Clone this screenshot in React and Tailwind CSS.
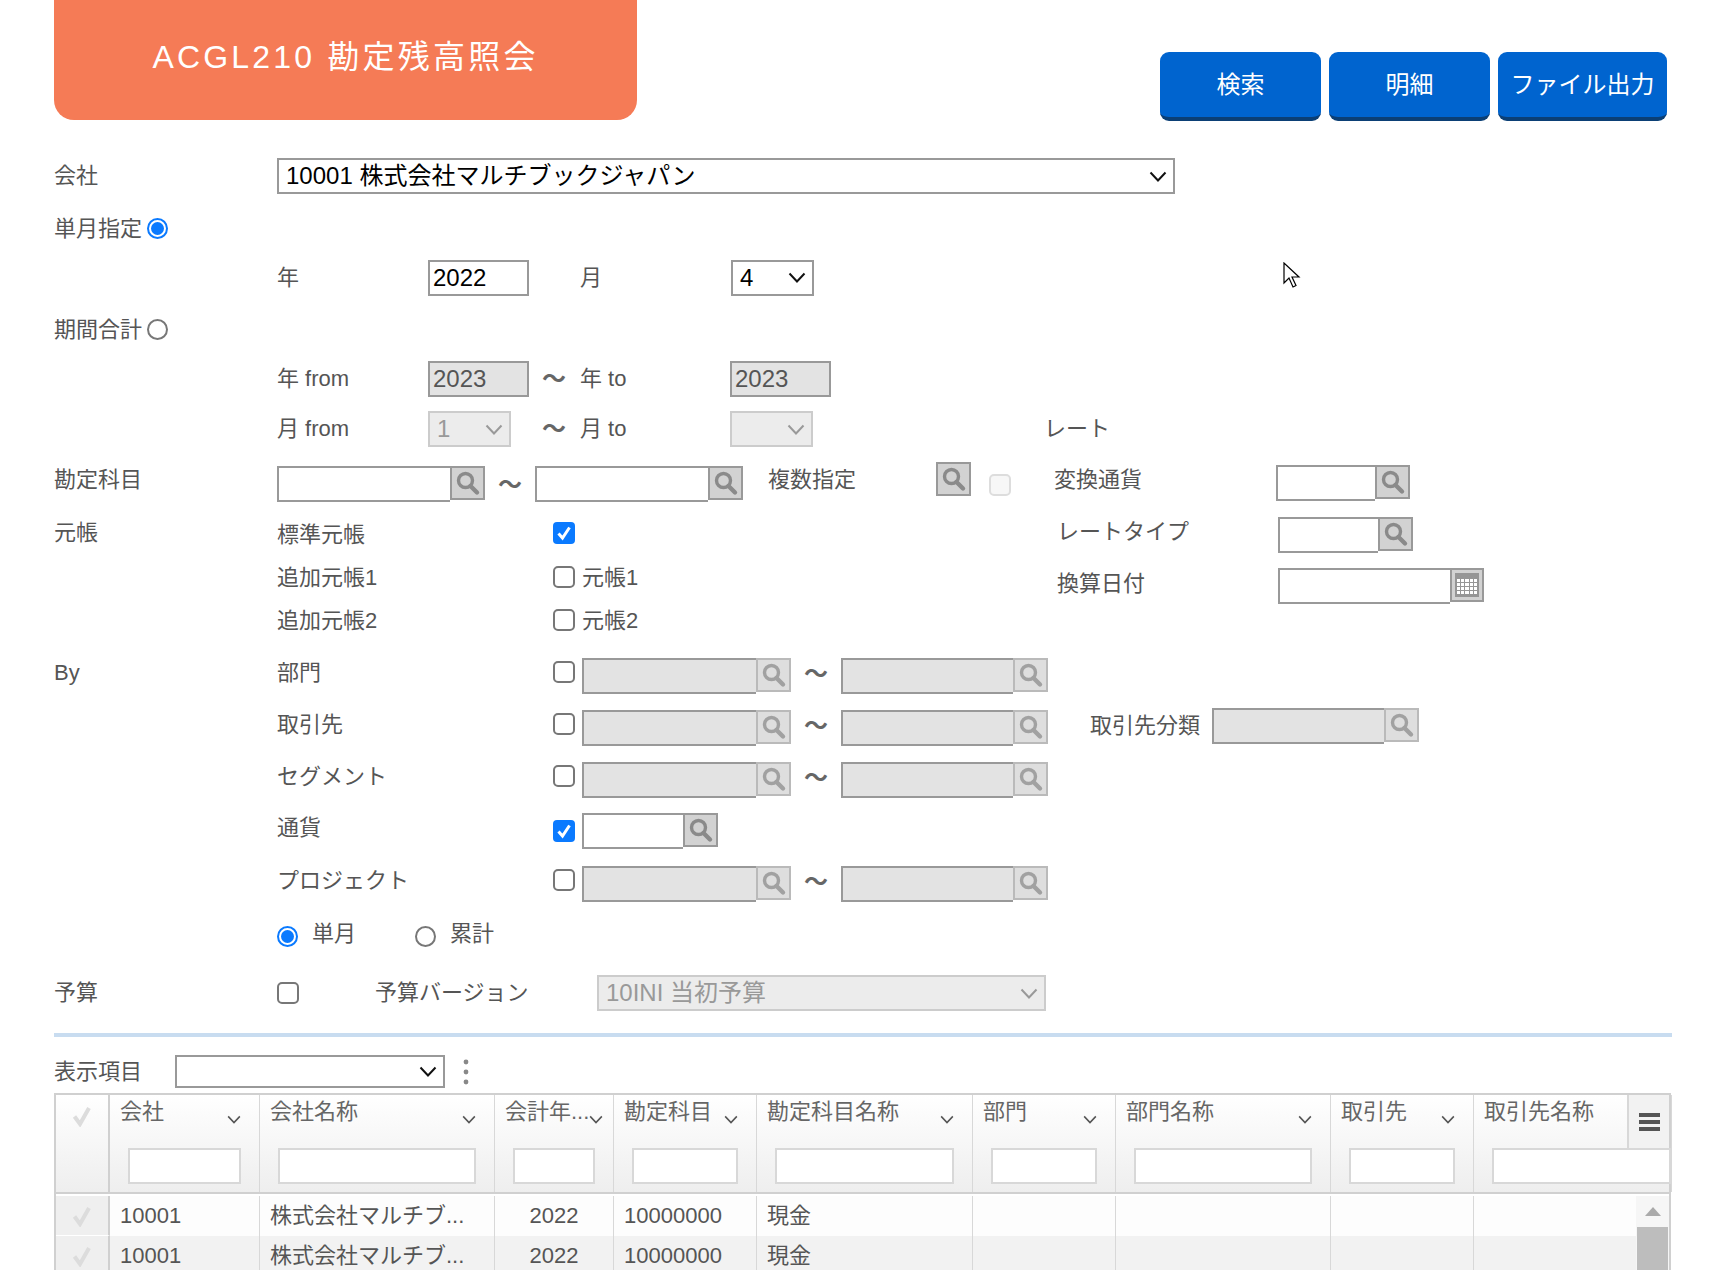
function Label({ children, className = "" }) {
  return <div className={`text-[22px] leading-none whitespace-nowrap text-[#555] ${className}`}>{children}</div>;
}

function Chevron({ disabled, small }) {
  return (
    <svg width={small ? 14 : 18} height={small ? 9 : 11} viewBox="0 0 18 11" fill="none" className="shrink-0">
      <path d="M1.5 1.5 9 9.5l7.5-8" stroke={small ? "#555" : disabled ? "#999" : "#111"} strokeWidth="2" />
    </svg>
  );
}

function SelectBox({ value, width, disabled, height = "h-[36px]" }) {
  return (
    <div className={`flex items-center justify-between border-2 pl-[7px] pr-[6px] text-[24px] leading-none ${width} ${height} ${disabled ? "border-[#ccc] bg-[#ececec] text-[#999]" : "border-[#999] bg-white text-black"}`}>
      <span className="whitespace-nowrap">{value}</span>
      <Chevron disabled={disabled} />
    </div>
  );
}

function TextBox({ value, width, disabled }) {
  return (
    <input
      readOnly
      value={value || ""}
      className={`h-[36px] border-2 border-[#999] px-[3px] text-[24px] leading-none outline-none ${width} ${disabled ? "bg-[#e3e3e3] text-[#555]" : "bg-white text-black"}`}
    />
  );
}

function SearchIcon() {
  return (
    <svg width="26" height="26" viewBox="0 0 26 26" fill="none">
      <circle cx="10.5" cy="10.5" r="7" stroke="#8a8a8a" strokeWidth="3.4" />
      <path d="M15.5 16 22 22.5" stroke="#8a8a8a" strokeWidth="4.4" strokeLinecap="round" />
    </svg>
  );
}

function SearchButton({ className = "" }) {
  return (
    <div className={`flex h-[34px] w-[35px] shrink-0 items-center justify-center border-2 border-[#999] bg-[#d2d2d2] ${className}`}>
      <SearchIcon />
    </div>
  );
}

function DisabledSearchButton() {
  return (
    <div className="flex h-[34px] w-[35px] shrink-0 items-center justify-center border-2 border-[#aaa] bg-[#d6d6d6] opacity-80">
      <SearchIcon />
    </div>
  );
}

function Lookup({ width, disabled }) {
  return (
    <div className="flex h-[36px] shrink-0 items-start">
      <input readOnly className={`h-[36px] border-y-2 border-l-2 border-[#999] outline-none ${width} ${disabled ? "bg-[#e3e3e3]" : "bg-white"}`} />
      {disabled ? <DisabledSearchButton /> : <SearchButton />}
    </div>
  );
}

function CalendarButton() {
  const cells = Array.from({ length: 20 });
  return (
    <div className="flex h-[34px] w-[34px] items-center justify-center border-2 border-[#999] bg-[#d2d2d2]">
      <div className="flex h-[24px] w-[24px] flex-col bg-[#969696] px-[2px] pt-[6px]">
        <div className="grid grid-cols-5 gap-[1px]">
          {cells.map((_, i) => (
            <span key={i} className="h-[3px] bg-white" />
          ))}
        </div>
      </div>
    </div>
  );
}

function Radio({ checked }) {
  return (
    <div className={`flex h-[21px] w-[21px] shrink-0 items-center justify-center rounded-full border-2 bg-white ${checked ? "border-[#0a7aff]" : "border-[#777]"}`}>
      {checked && <div className="h-[13px] w-[13px] rounded-full bg-[#0a7aff]" />}
    </div>
  );
}

function Checkbox({ checked, disabled, className = "" }) {
  if (checked) {
    return (
      <div className={`flex h-[22px] w-[22px] shrink-0 items-center justify-center rounded-[4px] bg-[#0a7aff] ${className}`}>
        <svg width="16" height="16" viewBox="0 0 16 16" fill="none">
          <path d="M2.5 8.5 6.5 13 13.5 2.5" stroke="#fff" strokeWidth="3" />
        </svg>
      </div>
    );
  }
  return (
    <div className={`h-[22px] w-[22px] shrink-0 rounded-[5px] border-2 ${disabled ? "border-[#ddd] bg-[#f7f7f7]" : "border-[#777] bg-white"} ${className}`} />
  );
}

function Tilde({ className = "" }) {
  return <div className={`text-[24px] font-bold leading-none text-[#666] ${className}`}>〜</div>;
}

function ByRow({ name, first, className = "", children }) {
  return (
    <div className={`flex h-[36px] items-center pl-[54px] ${className}`}>
      <Label className="mb-[6px] w-[223px]">{first}</Label>
      <Label className="mb-[6px] w-[276px]">{name}</Label>
      {children}
    </div>
  );
}

function Range() {
  return (
    <>
      <Checkbox className="mb-[8px] mr-[7px]" />
      <Lookup width="w-[174px]" disabled />
      <Tilde className="mb-[4px] w-[50px] pl-[13px]" />
      <Lookup width="w-[172px]" disabled />
    </>
  );
}

const columns = [
  { label: "会社", width: "w-[150px]" },
  { label: "会社名称", width: "w-[235px]" },
  { label: "会計年...", width: "w-[119px]" },
  { label: "勘定科目", width: "w-[143px]" },
  { label: "勘定科目名称", width: "w-[216px]" },
  { label: "部門", width: "w-[143px]" },
  { label: "部門名称", width: "w-[215px]" },
  { label: "取引先", width: "w-[143px]" },
  { label: "取引先名称", width: "w-[198px]", last: true },
];

const rowCells = ["10001", "株式会社マルチブ...", "2022", "10000000", "現金", "", "", "", ""];

function CheckMark() {
  return (
    <svg width="20" height="22" viewBox="0 0 20 22" fill="none">
      <path d="M2.5 11.5 8 19 17 3" stroke="#dcdcdc" strokeWidth="4" />
    </svg>
  );
}

function Table() {
  return (
    <div className="relative mt-[5px] ml-[54px] w-[1617px] border-x-2 border-t-2 border-[#d0d0d0]">
      <div className="flex h-[99px] border-b-2 border-[#d0d0d0] bg-gradient-to-b from-white to-[#eeeeee]">
        <div className="flex w-[54px] shrink-0 justify-center border-r-2 border-[#d0d0d0] pt-[10px]">
          <CheckMark />
        </div>
        {columns.map((col) => (
          <div key={col.label} className={`shrink-0 border-r border-[#d8d8d8] ${col.width}`}>
            <div className="flex h-[53px] justify-between pl-[10px] pr-[18px] pt-[6px]">
              <Label className="text-[#666]">{col.label}</Label>
              {!col.last && <div className="pt-[14px]"><Chevron small /></div>}
            </div>
            <div className={col.last ? "pl-[18px]" : "px-[18px]"}>
              <div className="h-[36px] border-2 border-[#d8d8d8] bg-white" />
            </div>
          </div>
        ))}
      </div>
      <div className="flex h-[80px] overflow-hidden pt-[2px]">
        <div className="min-w-0 flex-1 overflow-hidden">
          {[0, 1].map((r) => (
            <div key={r} className={`flex h-[40px] w-max ${r === 0 ? "bg-[#fdfdfd]" : "bg-[#f2f2f2]"}`}>
              <div className="flex w-[54px] shrink-0 items-center justify-center border-b border-r-2 border-b-white border-r-[#d0d0d0] bg-[#efefef]">
                <CheckMark />
              </div>
              {columns.map((col, i) => (
                <div key={col.label} className={`flex shrink-0 items-center border-r border-[#d8d8d8] px-[10px] text-[22px] leading-none whitespace-nowrap text-[#555] ${col.width} ${i === 2 ? "justify-center" : ""}`}>
                  {rowCells[i]}
                </div>
              ))}
            </div>
          ))}
        </div>
        <div className="w-[33px] shrink-0 bg-[#f6f6f6]">
          <div className="flex h-[31px] items-center justify-center">
            <div className="h-0 w-0 border-x-[8px] border-b-[9px] border-x-transparent border-b-[#aaa]" />
          </div>
          <div className="mx-[1px] h-[60px] bg-[#bdbdbd]" />
        </div>
      </div>
      <div className="absolute right-0 top-0 flex h-[55px] w-[42px] flex-col items-center justify-center gap-[3px] border-b-2 border-l-2 border-[#d8d8d8] bg-[#f2f2f2]">
        <span className="h-[4px] w-[21px] bg-[#555]" />
        <span className="h-[4px] w-[21px] bg-[#555]" />
        <span className="h-[4px] w-[21px] bg-[#555]" />
      </div>
    </div>
  );
}

export default function App() {
  return (
    <div className="relative h-[1270px] w-[1725px] overflow-hidden bg-white [font-family:'Liberation_Sans','Noto_Sans_CJK_JP',sans-serif]">
      {/* Title and actions */}
      <div className="flex h-[121px] items-start justify-between pl-[54px] pr-[58px]">
        <div className="flex h-[120px] w-[583px] items-center justify-center rounded-b-[20px] bg-[#f57b56] pb-[6px] text-[32px] leading-none tracking-[3.2px] text-white">
          ACGL210 勘定残高照会
        </div>
        <div className="mt-[52px] flex gap-[8px]">
          {["検索", "明細"].map((t) => (
            <div key={t} className="flex h-[69px] w-[161px] items-center justify-center rounded-[9px] border-b-[4px] border-[#0b3f75] bg-[#0064cf] text-[24px] leading-none text-white">
              {t}
            </div>
          ))}
          <div className="flex h-[69px] w-[169px] items-center justify-center rounded-[9px] border-b-[4px] border-[#0b3f75] bg-[#0064cf] text-[24px] leading-none text-white">
            ファイル出力
          </div>
        </div>
      </div>

      {/* Company */}
      <div className="mt-[37px] flex h-[36px] items-center pl-[54px]">
        <Label className="w-[223px]">会社</Label>
        <SelectBox width="w-[898px]" value="10001 株式会社マルチブックジャパン" />
      </div>

      {/* Single month */}
      <div className="mt-[24px] flex h-[21px] items-center pl-[54px]">
        <Label className="w-[93px]">単月指定</Label>
        <Radio checked />
      </div>
      <div className="mt-[20px] flex h-[37px] items-center pl-[277px]">
        <Label className="w-[151px]">年</Label>
        <TextBox width="w-[101px]" value="2022" />
        <Label className="w-[51px] pl-0" />
        <Label className="w-[151px]">月</Label>
        <SelectBox width="w-[83px]" value="4" />
      </div>

      {/* Period total */}
      <div className="mt-[23px] flex h-[21px] items-center pl-[54px]">
        <Label className="w-[93px]">期間合計</Label>
        <Radio />
      </div>
      <div className="mt-[21px] flex h-[36px] items-center pl-[277px]">
        <Label className="w-[151px]">年 from</Label>
        <TextBox width="w-[101px]" value="2023" disabled />
        <Tilde className="w-[51px] pl-[13px]" />
        <Label className="w-[150px]">年 to</Label>
        <TextBox width="w-[101px]" value="2023" disabled />
      </div>
      <div className="mt-[14px] flex h-[36px] items-center pl-[277px]">
        <Label className="w-[151px]">月 from</Label>
        <SelectBox width="w-[83px]" value="1" disabled />
        <Tilde className="ml-[18px] w-[51px] pl-[13px]" />
        <Label className="w-[150px]">月 to</Label>
        <SelectBox width="w-[83px]" value="" disabled />
        <Label className="ml-[231px]">レート</Label>
      </div>

      {/* Accounts and ledgers, rate settings on the right */}
      <div className="mt-[15px] flex items-start pl-[54px]">
        <div className="w-[1000px] shrink-0">
          <div className="flex h-[41px] items-start">
            <Label className="mt-[7px] w-[223px]">勘定科目</Label>
            <div className="mt-[4px]"><Lookup width="w-[173px]" /></div>
            <Tilde className="mt-[11px] w-[50px] pl-[13px]" />
            <div className="mt-[4px]"><Lookup width="w-[173px]" /></div>
            <Label className="ml-[25px] mt-[7px] w-[168px]">複数指定</Label>
            <SearchButton />
            <Checkbox disabled className="ml-[18px] mt-[12px]" />
          </div>
          <div className="mt-[21px] flex h-[22px] items-center">
            <Label className="mb-[4px] w-[223px]">元帳</Label>
            <Label className="w-[276px]">標準元帳</Label>
            <Checkbox checked className="mb-[4px]" />
          </div>
          <div className="mt-[21px] flex h-[22px] items-center">
            <div className="w-[223px]" />
            <Label className="w-[276px]">追加元帳1</Label>
            <Checkbox className="mb-[3px] mr-[7px]" />
            <Label className="text-[20px]">元帳1</Label>
          </div>
          <div className="mt-[21px] flex h-[22px] items-center">
            <div className="w-[223px]" />
            <Label className="w-[276px]">追加元帳2</Label>
            <Checkbox className="mb-[3px] mr-[7px]" />
            <Label className="text-[20px]">元帳2</Label>
          </div>
        </div>
        <div>
          <div className="mt-[3px] flex h-[36px] items-center">
            <Label className="mb-[6px] w-[222px]">変換通貨</Label>
            <Lookup width="w-[99px]" />
          </div>
          <div className="mt-[16px] flex h-[36px] items-center pl-[3px]">
            <Label className="mb-[6px] w-[221px]">レートタイプ</Label>
            <Lookup width="w-[100px]" />
          </div>
          <div className="mt-[15px] flex h-[36px] items-start pl-[3px]">
            <Label className="mt-[5px] w-[221px]">換算日付</Label>
            <input readOnly className="h-[36px] w-[172px] border-y-2 border-l-2 border-[#999] outline-none" />
            <CalendarButton />
          </div>
        </div>
      </div>

      {/* By */}
      <ByRow first="By" name="部門" className="mt-[26px]"><Range /></ByRow>
      <ByRow name="取引先" className="mt-[16px]">
        <Range />
        <Label className="mb-[4px] ml-[42px] w-[122px]">取引先分類</Label>
        <div className="mb-[4px]"><Lookup width="w-[172px]" disabled /></div>
      </ByRow>
      <ByRow name="セグメント" className="mt-[16px]"><Range /></ByRow>
      <ByRow name="通貨" className="mt-[15px]">
        <Checkbox checked className="mb-[0px] mr-[7px]" />
        <Lookup width="w-[101px]" />
      </ByRow>
      <ByRow name="プロジェクト" className="mt-[17px]"><Range /></ByRow>

      <div className="mt-[23px] flex h-[22px] items-center pl-[277px]">
        <Radio checked />
        <Label className="mb-[4px] ml-[14px] w-[44px]">単月</Label>
        <div className="ml-[59px]"><Radio /></div>
        <Label className="mb-[4px] ml-[14px]">累計</Label>
      </div>

      {/* Budget */}
      <div className="mt-[28px] flex h-[36px] items-center pl-[54px]">
        <Label className="w-[223px]">予算</Label>
        <Checkbox />
        <Label className="ml-[76px] w-[222px]">予算バージョン</Label>
        <SelectBox width="w-[449px]" value="10INI 当初予算" disabled />
      </div>

      <div className="ml-[54px] mt-[22px] h-[4px] w-[1618px] bg-[#c8dcf0]" />

      {/* Result grid */}
      <div className="mt-[18px] flex h-[33px] items-center pl-[54px]">
        <Label className="w-[121px] text-[20px]">表示項目</Label>
        <SelectBox width="w-[270px]" height="h-[33px]" value="" />
        <svg width="6" height="26" viewBox="0 0 6 26" className="ml-[18px]">
          <circle cx="3" cy="3" r="2.4" fill="#888" />
          <circle cx="3" cy="13" r="2.4" fill="#888" />
          <circle cx="3" cy="23" r="2.4" fill="#888" />
        </svg>
      </div>
      <Table />

      {/* Mouse pointer captured in the screenshot */}
      <svg width="20" height="28" viewBox="0 0 20 28" className="absolute left-[1283px] top-[262px]">
        <path d="M1 1v20l5-5 4 9 3-1.5-4-8.500h7z" fill="#fff" stroke="#000" strokeWidth="1.200" />
      </svg>
    </div>
  );
}
